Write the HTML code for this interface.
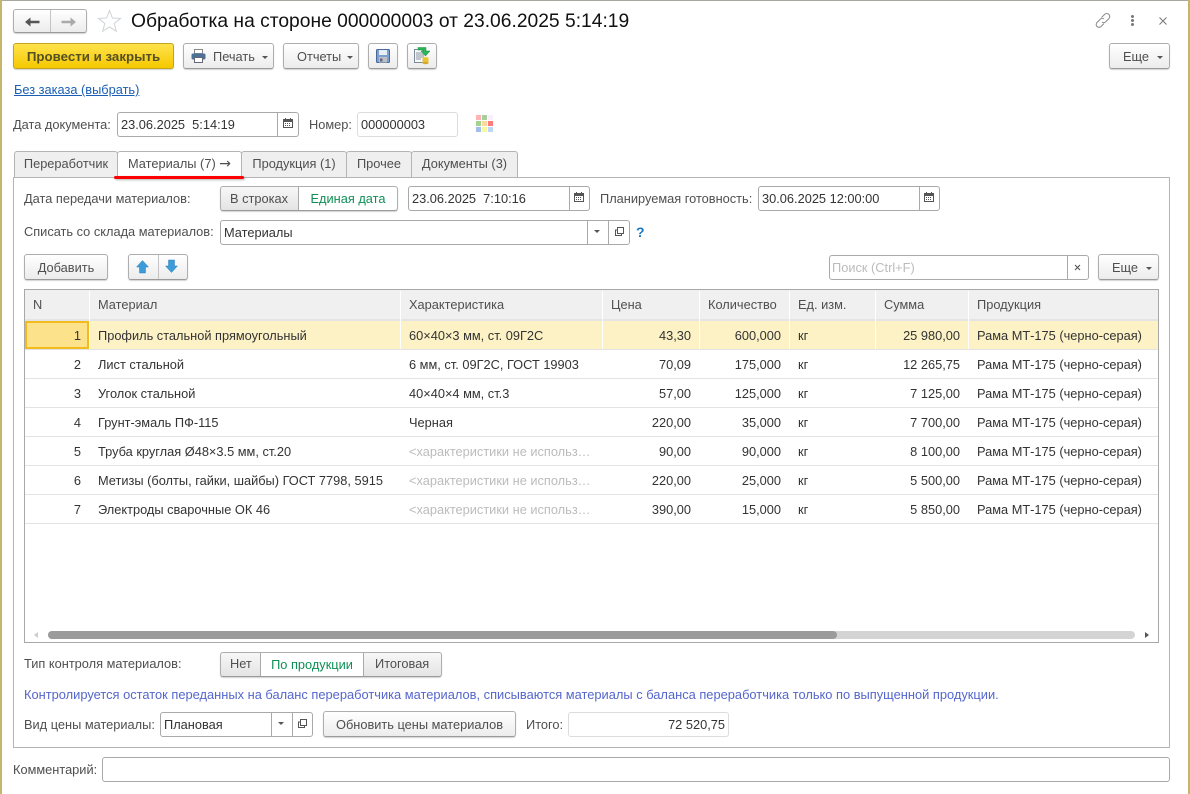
<!DOCTYPE html>
<html lang="ru"><head><meta charset="utf-8"><title>Обработка на стороне</title>
<style>
html,body{margin:0;padding:0;background:#fff}
#p{position:relative;width:1190px;height:794px;overflow:hidden;background:#fff;font:12.8px "Liberation Sans",Arial,sans-serif;color:#4b4b4b}
#p div,#p svg{position:absolute;box-sizing:border-box}
.t{white-space:nowrap;line-height:14px;height:14px;color:#4f4f4f}
.r{text-align:right}
.btn{border:1px solid #aeaeae;border-bottom-color:#9a9a9a;border-radius:3px;background:linear-gradient(#fff,#ececec);box-shadow:0 1px 1px rgba(0,0,0,.18);color:#4f4f4f;text-align:center;line-height:24px;white-space:nowrap}
.fld{border:1px solid #a9a9a9;border-radius:3px;background:#fff;color:#333;line-height:23px;padding-left:3px;white-space:nowrap}
.sep{width:1px;background:#a9a9a9;top:0;bottom:0}
.car{width:0;height:0;border-left:3px solid transparent;border-right:3px solid transparent;border-top:3px solid #555}
.tab{top:151px;height:26px;border:1px solid #b4b4b4;border-bottom:none;background:#efefef;border-radius:3px 3px 0 0;line-height:24px;text-align:center;color:#4f4f4f;white-space:nowrap}
.hc{top:291px;height:28px;background:#f0f0f0;line-height:27px;padding-left:8px;color:#4f4f4f;white-space:nowrap}
.hl{height:1px;left:25px;width:1133px;background:#e3e3e3}
.vl{width:1px;background:#e8e8e8;top:291px;height:58px}
.c{white-space:nowrap;line-height:14px;height:14px;color:#333}
.g{color:#bcbcbc}
</style></head><body><div id="p">

<div style="left:0;top:0;width:1190px;height:1px;background:#a8a8a0"></div>
<div style="left:0;top:0;width:2px;height:794px;background:#c5b66c"></div>
<div style="left:1188px;top:0;width:2px;height:794px;background:#c5b66c"></div>

<!-- nav -->
<div class="btn" style="left:13px;top:9px;width:74px;height:24px"></div>
<div style="left:50px;top:10px;width:1px;height:22px;background:#c4c4c4"></div>
<svg style="left:25px;top:17px" width="15" height="10" viewBox="0 0 15 10"><path d="M0 5 L5.5 .5 V3.7 H14.5 V6.3 H5.5 V9.5 Z" fill="#555"/></svg>
<svg style="left:61px;top:17px" width="15" height="10" viewBox="0 0 15 10"><path d="M15 5 L9.5 .5 V3.7 H.5 V6.3 H9.5 V9.5 Z" fill="#aaa"/></svg>
<svg style="left:97px;top:9px" width="25" height="24" viewBox="0 0 25 24"><path d="M12.5 1.5 L15.4 9 L23.5 9.4 L17.2 14.5 L19.3 22.3 L12.5 18 L5.7 22.3 L7.8 14.5 L1.5 9.4 L9.6 9 Z" fill="#fff" stroke="#cfd3d6" stroke-width="1"/></svg>
<div style="left:131px;top:11px;height:22px;line-height:22px;font-size:19.25px;color:#111;white-space:nowrap">Обработка на стороне 000000003 от 23.06.2025 5:14:19</div>

<!-- top-right -->
<svg style="left:1094px;top:12px" width="18" height="17" viewBox="0 0 18 17" fill="none" stroke="#8a8a8a" stroke-width="1"><path d="M7.5 5.5 L10.5 2.5 A2.6 2.6 0 0 1 15 6.5 L11.5 10 A2.6 2.6 0 0 1 8 10"/><path d="M10 7 A2.6 2.6 0 0 0 6.5 7 L3 10.5 A2.6 2.6 0 0 0 7 14.5 L10 11.5"/></svg>
<div style="left:1131px;top:15px;width:3px;height:3px;background:#777;border-radius:2px"></div>
<div style="left:1131px;top:19px;width:3px;height:3px;background:#777;border-radius:2px"></div>
<div style="left:1131px;top:23px;width:3px;height:3px;background:#777;border-radius:2px"></div>
<svg style="left:1159px;top:17px" width="8" height="8" viewBox="0 0 8 8"><path d="M.5 .5 L7.5 7.5 M7.5 .5 L.5 7.5" stroke="#777" stroke-width="1"/></svg>

<!-- toolbar -->
<div class="btn" style="left:13px;top:43px;width:161px;height:26px;line-height:25px;background:linear-gradient(#ffe34d,#f5c800);border-color:#c2a51c;color:#555024;font-weight:bold;font-size:13.3px">Провести и закрыть</div>
<div class="btn" style="left:183px;top:43px;width:91px;height:26px;text-align:left;padding-left:29px;line-height:25px">Печать</div>
<svg style="left:191px;top:49px" width="15" height="14" viewBox="0 0 15 14"><rect x="3.5" y=".5" width="8" height="4" fill="#fff" stroke="#888"/><rect x=".5" y="4.5" width="14" height="6" rx="1.5" fill="#4d7096"/><rect x="3.5" y="8.5" width="8" height="5" fill="#fff" stroke="#667"/></svg>
<div class="car" style="left:262px;top:56px"></div>
<div class="btn" style="left:283px;top:43px;width:76px;height:26px;text-align:left;padding-left:13px;line-height:25px">Отчеты</div>
<div class="car" style="left:347px;top:56px"></div>
<div class="btn" style="left:368px;top:43px;width:30px;height:26px"></div>
<svg style="left:376px;top:49px" width="14" height="14" viewBox="0 0 14 14"><rect x=".5" y=".5" width="13" height="13" rx="1" fill="#7fa0cd" stroke="#47689a"/><rect x="3" y="1" width="8" height="5" fill="#e8eef6"/><rect x="3" y="8" width="8" height="5.5" fill="#bcc1c8"/><rect x="4" y="9.5" width="2.5" height="3" fill="#667"/></svg>
<div class="btn" style="left:407px;top:43px;width:30px;height:26px"></div>
<svg style="left:414px;top:47px" width="17" height="18" viewBox="0 0 17 18"><path d="M.5 2.5 H9 V15.5 H.5 Z" fill="#f4f6f8" stroke="#7d8b99"/><path d="M2 6 H8 M2 8 H8 M2 10 H8 M2 12 H7" stroke="#8a97a5"/><path d="M4 .5 H12 V4 H16 L11.5 9 L7 4 H9.5 V3 H4 Z" fill="#2bb65a" stroke="#1c8a3a" stroke-width=".5"/><ellipse cx="11.5" cy="11" rx="3" ry="1.3" fill="#f0d050"/><rect x="8.5" y="11" width="6" height="5" fill="#e8c33c"/><ellipse cx="11.5" cy="16" rx="3" ry="1.3" fill="#d4a92c"/></svg>
<div class="btn" style="left:1109px;top:43px;width:61px;height:26px;text-align:left;padding-left:13px;line-height:25px">Еще</div>
<div class="car" style="left:1157px;top:56px"></div>

<div class="t" style="left:14px;top:83px;color:#1a5fb4;text-decoration:underline">Без заказа (выбрать)</div>

<!-- date row -->
<div class="t" style="left:13px;top:118px">Дата документа:</div>
<div class="fld" style="left:117px;top:112px;width:182px;height:25px">23.06.2025&nbsp; 5:14:19<div class="sep" style="left:159px"></div></div>
<svg style="left:283px;top:118px" width="10" height="10" viewBox="0 0 10 10"><path d="M.5 1.5 H9.5 V9.5 H.5 Z" fill="#fff" stroke="#555"/><rect x="0" y="1" width="10" height="3" fill="#555"/><path d="M2.5 0 V2 M7.5 0 V2" stroke="#555"/><path d="M2 5.5 H8 M2 7.5 H8" stroke="#555" stroke-dasharray="1 1"/></svg>
<div class="t" style="left:309px;top:118px">Номер:</div>
<div class="fld" style="left:357px;top:112px;width:101px;height:25px;border-color:#dcdcdc">000000003</div>
<svg style="left:476px;top:115px" width="18" height="18" viewBox="0 0 18 18"><rect x="0" y="0" width="5" height="5" fill="#ffb3b3"/><rect x="6" y="0" width="5" height="5" fill="#a8cf9b"/><rect x="12" y="0" width="5" height="5" fill="#f9eefb"/><rect x="0" y="6" width="5" height="5" fill="#a3d48f"/><rect x="6" y="6" width="5" height="5" fill="#fcd9a0"/><rect x="12" y="6" width="5" height="5" fill="#ff7b7b"/><rect x="0" y="12" width="5" height="5" fill="#a2bde8"/><rect x="6" y="12" width="5" height="5" fill="#f6f9a0"/><rect x="12" y="12" width="5" height="5" fill="#bcd7fb"/></svg>

<!-- panel -->
<div style="left:13px;top:177px;width:1157px;height:571px;border:1px solid #b4b4b4;background:#fff"></div>
<div class="tab" style="left:14px;width:104px">Переработчик</div>
<div class="tab" style="left:241px;width:106px">Продукция (1)</div>
<div class="tab" style="left:346px;width:66px">Прочее</div>
<div class="tab" style="left:411px;width:107px">Документы (3)</div>
<div class="tab" style="left:117px;width:125px;height:27px;background:#fff">Материалы (7) <span style="font-family:'DejaVu Sans',sans-serif;font-size:14px;line-height:0">→</span></div>
<div style="left:114px;top:176px;width:130px;height:3px;background:#f00;border-radius:2px;box-shadow:1px 1px 2px rgba(0,0,0,.3)"></div>

<!-- row 1 -->
<div class="t" style="left:24px;top:192px">Дата передачи материалов:</div>
<div class="btn" style="left:220px;top:186px;width:178px;height:25px;padding-right:100px;background:linear-gradient(#f7f7f7,#e4e4e4);line-height:23px">В строках</div>
<div style="left:298px;top:187px;width:99px;height:23px;background:#fff;border-left:1px solid #aaa;border-radius:0 3px 3px 0;color:#0f8f55;text-align:center;line-height:23px">Единая дата</div>
<div class="fld" style="left:408px;top:186px;width:182px;height:25px">23.06.2025&nbsp; 7:10:16<div class="sep" style="left:160px"></div></div>
<svg style="left:574px;top:192px" width="10" height="10" viewBox="0 0 10 10"><path d="M.5 1.5 H9.5 V9.5 H.5 Z" fill="#fff" stroke="#555"/><rect x="0" y="1" width="10" height="3" fill="#555"/><path d="M2.5 0 V2 M7.5 0 V2" stroke="#555"/><path d="M2 5.5 H8 M2 7.5 H8" stroke="#555" stroke-dasharray="1 1"/></svg>
<div class="t" style="left:600px;top:192px">Планируемая готовность:</div>
<div class="fld" style="left:758px;top:186px;width:182px;height:25px">30.06.2025 12:00:00<div class="sep" style="left:160px"></div></div>
<svg style="left:924px;top:192px" width="10" height="10" viewBox="0 0 10 10"><path d="M.5 1.5 H9.5 V9.5 H.5 Z" fill="#fff" stroke="#555"/><rect x="0" y="1" width="10" height="3" fill="#555"/><path d="M2.5 0 V2 M7.5 0 V2" stroke="#555"/><path d="M2 5.5 H8 M2 7.5 H8" stroke="#555" stroke-dasharray="1 1"/></svg>

<!-- row 2 -->
<div class="t" style="left:24px;top:225px">Списать со склада материалов:</div>
<div class="fld" style="left:220px;top:220px;width:410px;height:25px">Материалы<div class="sep" style="left:366px"></div><div class="sep" style="left:387px"></div></div>
<div class="car" style="left:594px;top:230px"></div>
<svg style="left:615px;top:227px" width="9" height="9" viewBox="0 0 9 9" fill="none" stroke="#555"><rect x="2.5" y=".5" width="6" height="6"/><path d="M2.5 3 H.5 V8.5 H6.5 V6.5"/></svg>
<div class="t" style="left:636px;top:225px;color:#1a78c2;font-size:14px;font-weight:bold">?</div>

<!-- row 3 -->
<div class="btn" style="left:24px;top:254px;width:84px;height:26px;line-height:25px">Добавить</div>
<div class="btn" style="left:128px;top:254px;width:60px;height:26px"></div>
<div style="left:158px;top:255px;width:1px;height:24px;background:#c4c4c4"></div>
<svg style="left:136px;top:260px" width="13" height="14" viewBox="0 0 13 14"><path d="M6.5 .5 L12.5 7 H9.5 V13 H3.5 V7 H.5 Z" fill="#3d9bd9" stroke="#2c7fb8" stroke-width=".5"/></svg>
<svg style="left:165px;top:259px" width="13" height="14" viewBox="0 0 13 14"><path d="M6.5 13.5 L12.5 7 H9.5 V1 H3.5 V7 H.5 Z" fill="#3d9bd9" stroke="#2c7fb8" stroke-width=".5"/></svg>
<div class="fld" style="left:829px;top:255px;width:260px;height:25px;color:#bcbcbc;padding-left:2px">Поиск (Ctrl+F)<div class="sep" style="left:237px"></div></div>
<svg style="left:1074px;top:264px" width="7" height="7" viewBox="0 0 7 7"><path d="M1 1 L6 6 M6 1 L1 6" stroke="#555" stroke-width="1.1"/></svg>
<div class="btn" style="left:1098px;top:254px;width:61px;height:26px;text-align:left;padding-left:13px;line-height:25px">Еще</div>
<div class="car" style="left:1146px;top:267px"></div>

<!-- table -->
<div style="left:24px;top:289px;width:1135px;height:354px;border:1px solid #a8a8a8;background:#fff"></div>
<div style="left:25px;top:290px;width:1133px;height:29px;background:#f0f0f0"></div>
<div class="hc" style="left:25px;width:64px">N</div>
<div class="hc" style="left:90px;width:310px">Материал</div>
<div class="hc" style="left:401px;width:201px">Характеристика</div>
<div class="hc" style="left:603px;width:96px">Цена</div>
<div class="hc" style="left:700px;width:89px">Количество</div>
<div class="hc" style="left:790px;width:85px">Ед. изм.</div>
<div class="hc" style="left:876px;width:92px">Сумма</div>
<div class="hc" style="left:969px;width:189px">Продукция</div>
<div style="left:25px;top:319px;width:1133px;height:2px;background:#e4e4e4"></div>
<div style="left:25px;top:321px;width:1133px;height:28px;background:#fdf2c5"></div>
<div style="left:25px;top:321px;width:64px;height:28px;background:#fde28c;border:2px solid #f3bb1e"></div>
<div class="vl" style="left:89px;background:#fff"></div>
<div class="vl" style="left:400px;background:#fff"></div>
<div class="vl" style="left:602px;background:#fff"></div>
<div class="vl" style="left:699px;background:#fff"></div>
<div class="vl" style="left:789px;background:#fff"></div>
<div class="vl" style="left:875px;background:#fff"></div>
<div class="vl" style="left:968px;background:#fff"></div>
<div class="hl" style="top:349px"></div><div class="hl" style="top:378px"></div><div class="hl" style="top:407px"></div><div class="hl" style="top:436px"></div><div class="hl" style="top:465px"></div><div class="hl" style="top:494px"></div><div class="hl" style="top:523px"></div>

<div class="c r" style="left:30px;width:51px;top:329px">1</div><div class="c" style="left:98px;top:329px">Профиль стальной прямоугольный</div><div class="c" style="left:409px;top:329px">60×40×3 мм, ст. 09Г2С</div><div class="c r" style="left:610px;width:81px;top:329px">43,30</div><div class="c r" style="left:700px;width:81px;top:329px">600,000</div><div class="c" style="left:798px;top:329px">кг</div><div class="c r" style="left:880px;width:80px;top:329px">25 980,00</div><div class="c" style="left:977px;top:329px">Рама МТ-175 (черно-серая)</div>

<div class="c r" style="left:30px;width:51px;top:358px">2</div><div class="c" style="left:98px;top:358px">Лист стальной</div><div class="c" style="left:409px;top:358px">6 мм, ст. 09Г2С, ГОСТ 19903</div><div class="c r" style="left:610px;width:81px;top:358px">70,09</div><div class="c r" style="left:700px;width:81px;top:358px">175,000</div><div class="c" style="left:798px;top:358px">кг</div><div class="c r" style="left:880px;width:80px;top:358px">12 265,75</div><div class="c" style="left:977px;top:358px">Рама МТ-175 (черно-серая)</div>

<div class="c r" style="left:30px;width:51px;top:387px">3</div><div class="c" style="left:98px;top:387px">Уголок стальной</div><div class="c" style="left:409px;top:387px">40×40×4 мм, ст.3</div><div class="c r" style="left:610px;width:81px;top:387px">57,00</div><div class="c r" style="left:700px;width:81px;top:387px">125,000</div><div class="c" style="left:798px;top:387px">кг</div><div class="c r" style="left:880px;width:80px;top:387px">7 125,00</div><div class="c" style="left:977px;top:387px">Рама МТ-175 (черно-серая)</div>

<div class="c r" style="left:30px;width:51px;top:416px">4</div><div class="c" style="left:98px;top:416px">Грунт-эмаль ПФ-115</div><div class="c" style="left:409px;top:416px">Черная</div><div class="c r" style="left:610px;width:81px;top:416px">220,00</div><div class="c r" style="left:700px;width:81px;top:416px">35,000</div><div class="c" style="left:798px;top:416px">кг</div><div class="c r" style="left:880px;width:80px;top:416px">7 700,00</div><div class="c" style="left:977px;top:416px">Рама МТ-175 (черно-серая)</div>

<div class="c r" style="left:30px;width:51px;top:445px">5</div><div class="c" style="left:98px;top:445px">Труба круглая Ø48×3.5 мм, ст.20</div><div class="c g" style="left:409px;top:445px">&lt;характеристики не использ…</div><div class="c r" style="left:610px;width:81px;top:445px">90,00</div><div class="c r" style="left:700px;width:81px;top:445px">90,000</div><div class="c" style="left:798px;top:445px">кг</div><div class="c r" style="left:880px;width:80px;top:445px">8 100,00</div><div class="c" style="left:977px;top:445px">Рама МТ-175 (черно-серая)</div>

<div class="c r" style="left:30px;width:51px;top:474px">6</div><div class="c" style="left:98px;top:474px">Метизы (болты, гайки, шайбы) ГОСТ 7798, 5915</div><div class="c g" style="left:409px;top:474px">&lt;характеристики не использ…</div><div class="c r" style="left:610px;width:81px;top:474px">220,00</div><div class="c r" style="left:700px;width:81px;top:474px">25,000</div><div class="c" style="left:798px;top:474px">кг</div><div class="c r" style="left:880px;width:80px;top:474px">5 500,00</div><div class="c" style="left:977px;top:474px">Рама МТ-175 (черно-серая)</div>

<div class="c r" style="left:30px;width:51px;top:503px">7</div><div class="c" style="left:98px;top:503px">Электроды сварочные ОК 46</div><div class="c g" style="left:409px;top:503px">&lt;характеристики не использ…</div><div class="c r" style="left:610px;width:81px;top:503px">390,00</div><div class="c r" style="left:700px;width:81px;top:503px">15,000</div><div class="c" style="left:798px;top:503px">кг</div><div class="c r" style="left:880px;width:80px;top:503px">5 850,00</div><div class="c" style="left:977px;top:503px">Рама МТ-175 (черно-серая)</div>

<!-- scrollbar -->
<div style="left:48px;top:631px;width:1087px;height:8px;background:#d4d4d4;border-radius:4px"></div>
<div style="left:48px;top:631px;width:789px;height:8px;background:#9b9b9b;border-radius:4px"></div>
<div style="left:34px;top:632px;width:0;height:0;border:3px solid transparent;border-left:0;border-right:4px solid #ccc"></div>
<div style="left:1145px;top:632px;width:0;height:0;border:3px solid transparent;border-right:0;border-left:4px solid #555"></div>

<!-- bottom -->
<div class="t" style="left:24px;top:657px">Тип контроля материалов:</div>
<div class="btn" style="left:220px;top:652px;width:222px;height:25px;background:linear-gradient(#f7f7f7,#e4e4e4)"></div>
<div class="t" style="left:230px;top:657px">Нет</div>
<div style="left:260px;top:653px;width:104px;height:23px;background:#fff;border-left:1px solid #aaa;border-right:1px solid #aaa;color:#0f8f55;text-align:center;line-height:23px">По продукции</div>
<div class="t" style="left:375px;top:657px">Итоговая</div>
<div class="t" style="left:24px;top:688px;color:#5566cc;font-size:12.87px">Контролируется остаток переданных на баланс переработчика материалов, списываются материалы с баланса переработчика только по выпущенной продукции.</div>

<div class="t" style="left:24px;top:718px">Вид цены материалы:</div>
<div class="fld" style="left:160px;top:712px;width:153px;height:25px">Плановая<div class="sep" style="left:110px"></div><div class="sep" style="left:131px"></div></div>
<div class="car" style="left:278px;top:722px"></div>
<svg style="left:298px;top:719px" width="9" height="9" viewBox="0 0 9 9" fill="none" stroke="#555"><rect x="2.5" y=".5" width="6" height="6"/><path d="M2.5 3 H.5 V8.5 H6.5 V6.5"/></svg>
<div class="btn" style="left:323px;top:711px;width:193px;height:26px;line-height:25px">Обновить цены материалов</div>
<div class="t" style="left:526px;top:718px">Итого:</div>
<div class="fld" style="left:568px;top:712px;width:161px;height:25px;border-color:#dcdcdc;text-align:right;padding-right:3px">72 520,75</div>

<div class="t" style="left:13px;top:763px">Комментарий:</div>
<div class="fld" style="left:102px;top:757px;width:1068px;height:25px"></div>
</div></body></html>
